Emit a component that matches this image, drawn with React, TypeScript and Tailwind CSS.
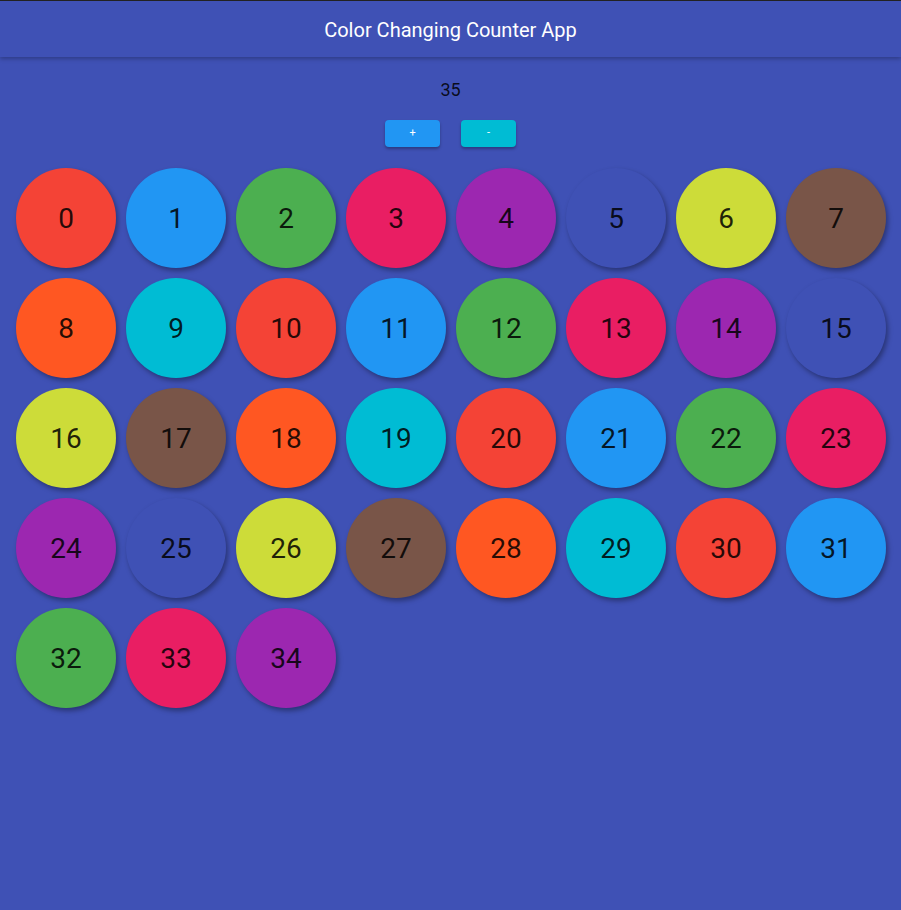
import React, { useState } from "react";

const colors = [
  "bg-[#F44336]",
  "bg-[#2196F3]",
  "bg-[#4CAF50]",
  "bg-[#E91E63]",
  "bg-[#9C27B0]",
  "bg-[#3F51B5]",
  "bg-[#CDDC39]",
  "bg-[#795548]",
  "bg-[#FF5722]",
  "bg-[#00BCD4]",
];

export default function App() {
  const [count, setCount] = useState(35);

  return (
    <div className="min-h-[910px] bg-[#3F51B5] font-['Roboto',sans-serif]">
      {/* ヘッダー */}
      <header className="h-[57px] border-t border-[#222] bg-[#3F51B5] shadow-[0_2px_4px_rgba(0,0,0,0.25)] flex items-center justify-center pt-[2px] relative">
        <h1 className="text-white text-[20px] leading-none">Color Changing Counter App</h1>
      </header>

      <div className="pt-[23px] text-center text-[18px] leading-[20px] text-black/85">{count}</div>

      <div className="flex justify-center gap-[21px] mt-[20px]">
        <button
          onClick={() => setCount(count + 1)}
          className="w-[55px] h-[27px] rounded bg-[#2196F3] text-white text-[11px] shadow-[0_2px_3px_rgba(0,0,0,0.3)]"
        >
          +
        </button>
        <button
          onClick={() => setCount(Math.max(0, count - 1))}
          className="w-[55px] h-[27px] rounded bg-[#00BCD4] text-white text-[11px] shadow-[0_2px_3px_rgba(0,0,0,0.3)]"
        >
          -
        </button>
      </div>

      {/* カウンター円 */}
      <div className="flex flex-wrap gap-[10px] pl-[16px] mt-[21px]">
        {Array.from({ length: count }).map((_, i) => (
          <div
            key={i}
            className={`w-[100px] h-[100px] rounded-full flex items-center justify-center pt-[2px] text-[28px] text-black/85 shadow-[2px_3px_5px_rgba(0,0,0,0.35)] ${colors[i % colors.length]}`}
          >
            {i}
          </div>
        ))}
      </div>
    </div>
  );
}
